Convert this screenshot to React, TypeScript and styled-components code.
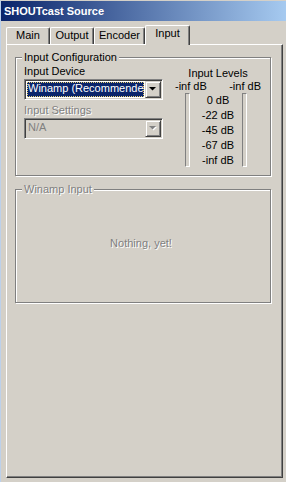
import React from "react";
import styled, { createGlobalStyle } from "styled-components";

const GlobalStyle = createGlobalStyle`
  html, body {
    margin: 0;
    padding: 0;
    background: #d4d0c8;
  }
  body {
    font-family: "Liberation Sans", Arial, sans-serif;
    font-size: 11px;
    color: #000;
  }
`;

const Window = styled.div`
  width: 286px;
  height: 482px;
  box-sizing: border-box;
  background: #d4d0c8;
  border-top: 1px solid #d4d0c8;
  border-left: 1px solid #bcd0ea;
  display: flex;
  flex-direction: column;
  overflow: hidden;
`;

const TitleBar = styled.div`
  height: 20px;
  line-height: 20px;
  padding-left: 3px;
  background: linear-gradient(to right, #0a246a, #a6caf0);
  color: #fff;
  font-weight: bold;
  font-size: 11px;
`;

const TabStrip = styled.div`
  display: flex;
  align-items: flex-end;
  height: 23px;
  padding-left: 5px;
`;

const Tab = styled.div<{ $w: number; $active?: boolean }>`
  position: relative;
  z-index: ${(p) => (p.$active ? 2 : 0)};
  width: ${(p) => p.$w}px;
  height: ${(p) => (p.$active ? 20 : 17)}px;
  margin-bottom: ${(p) => (p.$active ? -1 : 0)}px;
  box-sizing: border-box;
  background: #d4d0c8;
  border-top: 1px solid #fff;
  border-left: 1px solid #fff;
  border-right: 1px solid #404040;
  border-radius: 2px 2px 0 0;
  box-shadow: inset -1px 0 0 #808080;
  text-align: center;
  line-height: 15px;
`;

const Panel = styled.div`
  position: relative;
  z-index: 1;
  margin-left: 5px;
  width: 277px;
  height: 434px;
  box-sizing: border-box;
  border-top: 1px solid #fff;
  border-left: 1px solid #fff;
  border-right: 1px solid #404040;
  border-bottom: 1px solid #404040;
  box-shadow: inset -1px -1px 0 #808080;
  padding: 6px 0 0 8px;
  display: flex;
  flex-direction: column;
`;

const Group = styled.fieldset<{ $h: number; $gap?: number }>`
  margin: ${(p) => p.$gap ?? 0}px 0 0 0;
  width: 256px;
  height: ${(p) => p.$h}px;
  box-sizing: border-box;
  border: 1px solid #808080;
  box-shadow: inset 1px 1px 0 #fff, 1px 1px 0 #fff;
  padding: 1px 7px 0 8px;
  min-inline-size: 0;
`;

const Legend = styled.legend<{ $disabled?: boolean }>`
  padding: 0 2px;
  margin-left: -2px;
  line-height: 13px;
  height: 13px;
  background: #d4d0c8;
  color: ${(p) => (p.$disabled ? "#808080" : "#000")};
  text-shadow: ${(p) => (p.$disabled ? "1px 1px 0 #fff" : "none")};
`;

const ConfigBody = styled.div`
  display: flex;
  gap: 10px;
`;

const LeftCol = styled.div`
  width: 139px;
  display: flex;
  flex-direction: column;
`;

const FieldLabel = styled.div<{ $disabled?: boolean; $mt?: number }>`
  line-height: 13px;
  margin-top: ${(p) => p.$mt ?? 0}px;
  color: ${(p) => (p.$disabled ? "#808080" : "#000")};
  text-shadow: ${(p) => (p.$disabled ? "1px 1px 0 #fff" : "none")};
`;

const Select = styled.div<{ $disabled?: boolean }>`
  margin-top: 1px;
  width: 139px;
  height: 21px;
  box-sizing: border-box;
  border: 1px solid;
  border-color: #808080 #fff #fff #808080;
  box-shadow: inset 1px 1px 0 #404040, inset -1px -1px 0 #d4d0c8;
  background: ${(p) => (p.$disabled ? "#d4d0c8" : "#fff")};
  padding: 1px;
  display: flex;
`;

const Value = styled.div<{ $selected?: boolean }>`
  flex: 1;
  overflow: hidden;
  white-space: nowrap;
  margin: 1px 1px 1px 1px;
  padding-left: 1px;
  line-height: 13px;
  box-sizing: border-box;
  background: ${(p) => (p.$selected ? "#0a246a" : "transparent")};
  color: ${(p) => (p.$selected ? "#fff" : "#808080")};
  outline: ${(p) => (p.$selected ? "1px dotted #e8d070" : "none")};
  outline-offset: -1px;
`;

const DropButton = styled.div`
  width: 16px;
  height: 17px;
  box-sizing: border-box;
  background: #d4d0c8;
  border: 1px solid;
  border-color: #d4d0c8 #404040 #404040 #d4d0c8;
  box-shadow: inset 1px 1px 0 #fff, inset -1px -1px 0 #808080;
  display: flex;
  align-items: center;
  justify-content: center;
`;

const LevelsCol = styled.div`
  width: 90px;
  display: flex;
  flex-direction: column;
`;

const LevelsTitle = styled.div`
  margin-top: 2px;
  line-height: 13px;
  text-align: center;
`;

const PeakRow = styled.div`
  display: flex;
  justify-content: space-between;
  padding: 0 2px;
  line-height: 13px;
`;

const MeterRow = styled.div`
  display: flex;
  height: 74px;
`;

const MeterBar = styled.div<{ $ml: number; $mr: number }>`
  width: 5px;
  height: 74px;
  margin-left: ${(p) => p.$ml}px;
  margin-right: ${(p) => p.$mr}px;
  box-sizing: border-box;
  border: 1px solid;
  border-color: #808080 #fff #fff #808080;
`;

const Scale = styled.div`
  flex: 1;
  padding-left: 4px;
  display: flex;
  flex-direction: column;
  align-items: center;
`;

const ScaleMark = styled.div`
  line-height: 15px;
`;

const Placeholder = styled.div`
  padding-top: 40px;
  padding-right: 5px;
  text-align: center;
  line-height: 13px;
  color: #808080;
  text-shadow: 1px 1px 0 #fff;
`;

const Arrow = ({ disabled }: { disabled?: boolean }) => (
  <svg width="8" height="5" viewBox="0 0 8 5">
    {disabled && <polygon points="1,1 8,1 4.5,4.5" fill="#fff" />}
    <polygon points="0,0 7,0 3.5,3.5" fill={disabled ? "#808080" : "#000"} />
  </svg>
);

const tabs = [
  { label: "Main", w: 44 },
  { label: "Output", w: 44 },
  { label: "Encoder", w: 51 },
  { label: "Input", w: 45, active: true },
];

const marks = ["0 dB", "-22 dB", "-45 dB", "-67 dB", "-inf dB"];

export default function App() {
  return (
    <>
      <GlobalStyle />
      <Window>
        <TitleBar>SHOUTcast Source</TitleBar>
        <TabStrip>
          {tabs.map((t) => (
            <Tab key={t.label} $w={t.w} $active={t.active}>
              {t.label}
            </Tab>
          ))}
        </TabStrip>
        <Panel>
          <Group $h={125}>
            <Legend>Input Configuration</Legend>
            <ConfigBody>
              <LeftCol>
                <FieldLabel>Input Device</FieldLabel>
                <Select>
                  <Value $selected>Winamp (Recommended)</Value>
                  <DropButton>
                    <Arrow />
                  </DropButton>
                </Select>
                <FieldLabel $disabled $mt={4}>
                  Input Settings
                </FieldLabel>
                <Select $disabled>
                  <Value>N/A</Value>
                  <DropButton>
                    <Arrow disabled />
                  </DropButton>
                </Select>
              </LeftCol>
              <LevelsCol>
                <LevelsTitle>Input Levels</LevelsTitle>
                <PeakRow>
                  <span>-inf dB</span>
                  <span>-inf dB</span>
                </PeakRow>
                <MeterRow>
                  <MeterBar $ml={12} $mr={0} />
                  <Scale>
                    {marks.map((m) => (
                      <ScaleMark key={m}>{m}</ScaleMark>
                    ))}
                  </Scale>
                  <MeterBar $ml={0} $mr={16} />
                </MeterRow>
              </LevelsCol>
            </ConfigBody>
          </Group>
          <Group $h={120} $gap={7}>
            <Legend $disabled>Winamp Input</Legend>
            <Placeholder>Nothing, yet!</Placeholder>
          </Group>
        </Panel>
      </Window>
    </>
  );
}
